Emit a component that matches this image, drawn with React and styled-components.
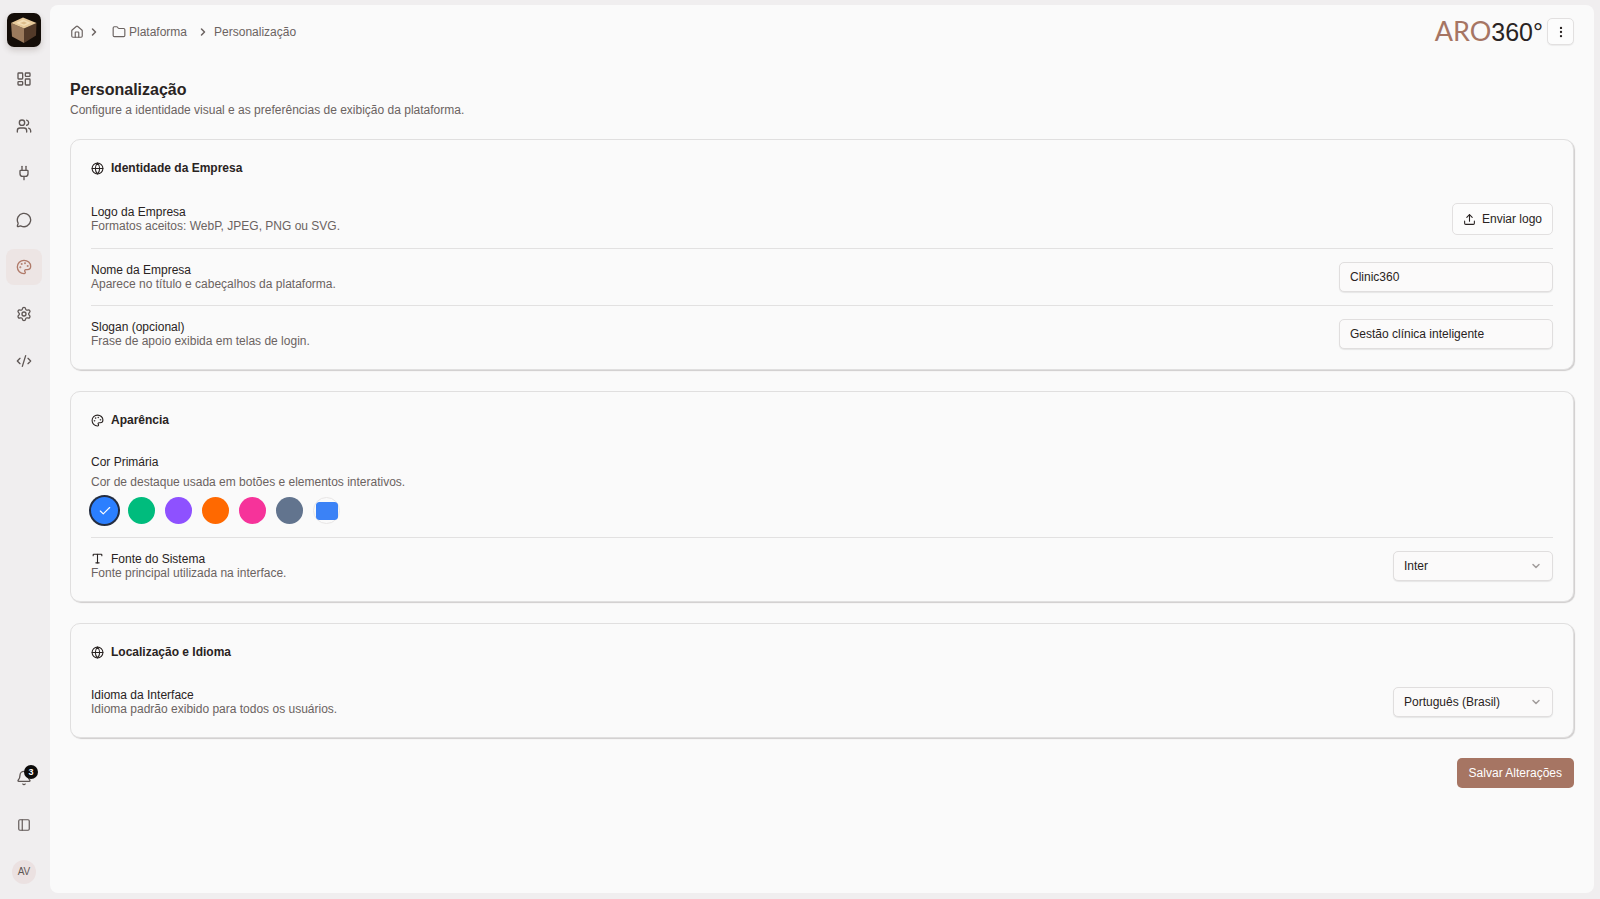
import React, { useState } from "react";
import styled, { createGlobalStyle } from "styled-components";
import {
  Bell,
  Check,
  ChevronDown,
  ChevronRight,
  CodeXml,
  EllipsisVertical,
  Folder,
  Globe,
  House,
  LayoutDashboard,
  MessageCircle,
  Palette,
  PanelLeft,
  Plug,
  Settings,
  Type,
  Upload,
  Users,
} from "lucide-react";

const GlobalStyle = createGlobalStyle`
  * {
    box-sizing: border-box;
  }
  body {
    margin: 0;
    background: #f0eeef;
    color: #292322;
    font-family: "Liberation Sans", Arial, sans-serif;
    font-size: 12px;
  }
  button, input, select {
    font-family: inherit;
    font-size: inherit;
    color: inherit;
  }
`;

const Layout = styled.div`
  display: flex;
  min-height: 100vh;
`;

const Sidebar = styled.aside`
  display: flex;
  flex-direction: column;
  align-items: center;
  width: 50px;
  padding: 13px 2px 9px 0;
`;

const Brand = styled.a`
  display: block;
  width: 34px;
  height: 34px;
  border-radius: 7px;
  box-shadow: 0 3px 6px rgba(60, 40, 30, 0.2);

  svg {
    display: block;
  }
`;

const Nav = styled.nav`
  display: flex;
  flex-direction: column;
  align-items: center;
  gap: 11px;
  margin-top: ${(props) => (props.$bottom ? "auto" : "14px")};
`;

const NavButton = styled.button`
  position: relative;
  display: flex;
  align-items: center;
  justify-content: center;
  width: 36px;
  height: 36px;
  padding: 0;
  border: none;
  border-radius: 8px;
  cursor: pointer;
  background: ${(props) => (props.$active ? "#ede5e4" : "transparent")};
  color: ${(props) => (props.$active ? "#b07a69" : "#5f5755")};
`;

const Badge = styled.span`
  position: absolute;
  top: 5px;
  right: 4px;
  width: 14px;
  height: 14px;
  border-radius: 50%;
  background: #0d0b0a;
  color: #fff;
  font-size: 9px;
  font-weight: bold;
  line-height: 14px;
  text-align: center;
`;

const Avatar = styled.span`
  width: 24px;
  height: 24px;
  border-radius: 50%;
  background: #ebe1e1;
  font-size: 10px;
  line-height: 24px;
  text-align: center;
`;

const Main = styled.main`
  flex: 1;
  min-width: 0;
  margin: 5px 6px 6px 0;
  padding: 13px 20px 20px;
  border-radius: 8px;
  background: #fafafa;
`;

const TopBar = styled.header`
  display: flex;
  align-items: center;
  justify-content: space-between;
  height: 27px;
`;

const Breadcrumb = styled.nav`
  display: flex;
  align-items: center;
  color: #6b6361;
`;

const Crumb = styled.a`
  display: flex;
  align-items: center;
  gap: 3px;
  color: inherit;
  text-decoration: none;
`;

const Separator = styled(ChevronRight)`
  margin: 0 ${(props) => props.$after} 0 ${(props) => props.$before};
`;

const TopActions = styled.div`
  display: flex;
  align-items: center;
  gap: 4px;
`;

const Wordmark = styled.span`
  font-size: 25px;
  line-height: 27px;
`;

const WordmarkAccent = styled.span`
  font-family: Lato, sans-serif;
  font-size: 27px;
  color: #a67563;
`;

const MenuButton = styled.button`
  display: flex;
  align-items: center;
  justify-content: center;
  width: 27px;
  height: 27px;
  padding: 0;
  border: 1px solid #e2e0e0;
  border-radius: 5px;
  background: #fcfcfc;
  box-shadow: 0 1px 1px rgba(0, 0, 0, 0.06);
  cursor: pointer;
`;

const PageHeader = styled.div`
  padding: 34px 0 20px;
`;

const PageTitle = styled.h1`
  margin: 0;
  font-size: 16px;
  line-height: 22px;
`;

const Description = styled.p`
  margin: 0;
  color: #6b6361;
  line-height: 15px;
`;

const PageDescription = styled(Description)`
  line-height: 18px;
`;

const Cards = styled.div`
  display: flex;
  flex-direction: column;
  gap: 21px;
`;

const Card = styled.section`
  padding: 20px;
  border: 1px solid #e0dfdf;
  border-radius: 10px;
  box-shadow: 1px 1px 1px #cfcdcd;
  background: #fafafa;
`;

const CardTitle = styled.h2`
  display: flex;
  align-items: center;
  gap: 7px;
  margin: 0 0 14px;
  font-size: 12px;
  line-height: 16px;
`;

const Row = styled.div`
  display: flex;
  align-items: center;
  justify-content: space-between;
  padding: 13px 0;
  border-bottom: 1px solid #e2e1e1;

  &:last-child {
    padding-bottom: 0;
    border-bottom: none;
  }
`;

const ColorRow = styled(Row)`
  flex-direction: column;
  align-items: flex-start;
`;

const Label = styled.label`
  display: flex;
  align-items: center;
  gap: 7px;
  line-height: 14px;
`;

const ColorLabel = styled(Label)`
  margin-bottom: 4px;
`;

const OutlineButton = styled.button`
  display: flex;
  align-items: center;
  gap: 6px;
  height: 32px;
  padding: 0 10px;
  border: 1px solid #e2e0e0;
  border-radius: 5px;
  background: #fcfcfc;
  cursor: pointer;
`;

const TextInput = styled.input`
  width: 214px;
  height: 30px;
  padding: 0 10px;
  border: 1px solid #e0dede;
  border-radius: 5px;
  background: #fbfafa;
  box-shadow: 0 1px 1px rgba(0, 0, 0, 0.08);
`;

const SelectWrap = styled.div`
  position: relative;
  width: 160px;

  svg {
    position: absolute;
    top: 9px;
    right: 11px;
    color: #a29d9c;
    pointer-events: none;
  }
`;

const Select = styled.select`
  width: 100%;
  height: 30px;
  padding: 0 10px;
  border: 1px solid #e0dede;
  border-radius: 5px;
  background: #fbfafa;
  box-shadow: 0 1px 1px rgba(0, 0, 0, 0.08);
  appearance: none;
`;

const Swatches = styled.div`
  display: flex;
  align-items: center;
  gap: 10px;
  margin-top: 6px;
`;

const Swatch = styled.button`
  display: flex;
  align-items: center;
  justify-content: center;
  width: 27px;
  height: 27px;
  padding: 0;
  border: none;
  border-radius: 50%;
  color: #fff;
  cursor: pointer;
  background: ${(props) => props.$color};
  box-shadow: ${(props) => (props.$selected ? "0 0 0 2px #242d40" : "none")};
`;

const CustomColor = styled.span`
  display: flex;
  align-items: center;
  justify-content: center;
  width: 27px;
  height: 27px;
  border: 1px solid #e8e6e6;
  border-radius: 50%;
`;

const ColorInput = styled.input`
  flex: none;
  width: 22px;
  height: 18px;
  padding: 0;
  border: none;
  border-radius: 3px;
  background: none;
  overflow: hidden;

  &::-webkit-color-swatch-wrapper {
    padding: 0;
  }
  &::-webkit-color-swatch {
    border: none;
    border-radius: 3px;
  }
`;

const Footer = styled.div`
  display: flex;
  justify-content: flex-end;
  margin-top: 20px;
`;

const SaveButton = styled.button`
  height: 30px;
  padding: 0 12px;
  border: none;
  border-radius: 5px;
  background: #a67563;
  color: #fff;
  cursor: pointer;
`;

const navItems = [
  { name: "Painel", icon: LayoutDashboard },
  { name: "Usuários", icon: Users },
  { name: "Integrações", icon: Plug },
  { name: "Mensagens", icon: MessageCircle },
  { name: "Personalização", icon: Palette, active: true },
  { name: "Configurações", icon: Settings },
  { name: "Desenvolvedor", icon: CodeXml },
];

const colors = ["#2b7fff", "#00bc7d", "#8e51ff", "#ff6900", "#f6339a", "#62748e"];

const BoxLogo = () => (
  <svg width="34" height="34" viewBox="0 0 34 34">
    <rect width="34" height="34" rx="7" fill="#140d08" />
    <path d="M4 10L17 15.500V30L5 23.500Z" fill="#9b7a5c" />
    <path d="M17 15.500L29.500 10L29 22.500L17 30Z" fill="#533a29" />
    <path d="M16 4.500L29.500 10L17 15.500L4 10Z" fill="#e6c899" />
    <path d="M9 10L16 6.500L24 10L17 13Z" fill="#f3deb6" />
    <path d="M13 10L17 8.500L20 10L17 11.500Z" fill="#dcbc8a" />
  </svg>
);

const App = () => {
  const [primary, setPrimary] = useState(colors[0]);

  return (
    <Layout>
      <GlobalStyle />
      <Sidebar>
        <Brand href="#" aria-label="Início">
          <BoxLogo />
        </Brand>
        <Nav>
          {navItems.map(({ name, icon: Icon, active }) => (
            <NavButton key={name} aria-label={name} $active={active}>
              <Icon size={16} />
            </NavButton>
          ))}
        </Nav>
        <Nav $bottom>
          <NavButton aria-label="Notificações">
            <Bell size={16} />
            <Badge>3</Badge>
          </NavButton>
          <NavButton aria-label="Alternar menu">
            <PanelLeft size={14} />
          </NavButton>
          <NavButton aria-label="Conta">
            <Avatar>AV</Avatar>
          </NavButton>
        </Nav>
      </Sidebar>

      <Main>
        <TopBar>
          <Breadcrumb aria-label="Navegação">
            <Crumb href="#" aria-label="Início">
              <House size={14} />
            </Crumb>
            <Separator size={12} strokeWidth={3} $before="4px" $after="12px" />
            <Crumb href="#">
              <Folder size={14} />
              Plataforma
            </Crumb>
            <Separator size={12} strokeWidth={3} $before="10px" $after="5px" />
            <span>Personalização</span>
          </Breadcrumb>
          <TopActions>
            <Wordmark>
              <WordmarkAccent>ARO</WordmarkAccent>360°
            </Wordmark>
            <MenuButton aria-label="Mais opções">
              <EllipsisVertical size={14} />
            </MenuButton>
          </TopActions>
        </TopBar>

        <PageHeader>
          <PageTitle>Personalização</PageTitle>
          <PageDescription>
            Configure a identidade visual e as preferências de exibição da plataforma.
          </PageDescription>
        </PageHeader>

        <Cards>
          <Card>
            <CardTitle>
              <Globe size={13} />
              Identidade da Empresa
            </CardTitle>
            <Row>
              <div>
                <Label htmlFor="logo">Logo da Empresa</Label>
                <Description>Formatos aceitos: WebP, JPEG, PNG ou SVG.</Description>
              </div>
              <OutlineButton id="logo">
                <Upload size={13} />
                Enviar logo
              </OutlineButton>
            </Row>
            <Row>
              <div>
                <Label htmlFor="nome">Nome da Empresa</Label>
                <Description>Aparece no título e cabeçalhos da plataforma.</Description>
              </div>
              <TextInput id="nome" type="text" defaultValue="Clinic360" />
            </Row>
            <Row>
              <div>
                <Label htmlFor="slogan">Slogan (opcional)</Label>
                <Description>Frase de apoio exibida em telas de login.</Description>
              </div>
              <TextInput id="slogan" type="text" defaultValue="Gestão clínica inteligente" />
            </Row>
          </Card>

          <Card>
            <CardTitle>
              <Palette size={13} />
              Aparência
            </CardTitle>
            <ColorRow>
              <ColorLabel htmlFor="cor">Cor Primária</ColorLabel>
              <PageDescription>
                Cor de destaque usada em botões e elementos interativos.
              </PageDescription>
              <Swatches>
                {colors.map((color) => (
                  <Swatch
                    key={color}
                    aria-label={color}
                    $color={color}
                    $selected={color === primary}
                    onClick={() => setPrimary(color)}
                  >
                    {color === primary && <Check size={14} />}
                  </Swatch>
                ))}
                <CustomColor>
                  <ColorInput
                    id="cor"
                    type="color"
                    defaultValue="#3b82f6"
                    onChange={(e) => setPrimary(e.target.value)}
                  />
                </CustomColor>
              </Swatches>
            </ColorRow>
            <Row>
              <div>
                <Label htmlFor="fonte">
                  <Type size={13} />
                  Fonte do Sistema
                </Label>
                <Description>Fonte principal utilizada na interface.</Description>
              </div>
              <SelectWrap>
                <Select id="fonte" defaultValue="Inter">
                  <option>Inter</option>
                </Select>
                <ChevronDown size={12} strokeWidth={3} />
              </SelectWrap>
            </Row>
          </Card>

          <Card>
            <CardTitle>
              <Globe size={13} />
              Localização e Idioma
            </CardTitle>
            <Row>
              <div>
                <Label htmlFor="idioma">Idioma da Interface</Label>
                <Description>Idioma padrão exibido para todos os usuários.</Description>
              </div>
              <SelectWrap>
                <Select id="idioma" defaultValue="Português (Brasil)">
                  <option>Português (Brasil)</option>
                </Select>
                <ChevronDown size={12} strokeWidth={3} />
              </SelectWrap>
            </Row>
          </Card>
        </Cards>

        <Footer>
          <SaveButton>Salvar Alterações</SaveButton>
        </Footer>
      </Main>
    </Layout>
  );
};

export default App;
